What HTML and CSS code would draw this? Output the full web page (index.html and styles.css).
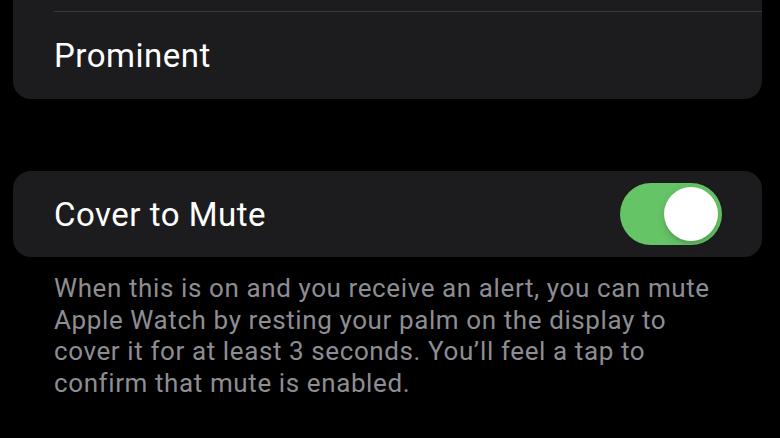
FILE: index.html
```html
<!DOCTYPE html>
<html lang="en">
<head>
    <meta charset="UTF-8">
    <meta name="viewport" content="width=device-width, initial-scale=1.0">
    <title>Notifications</title>
    <link rel="stylesheet" href="styles.css">
</head>
<body>
    <div class="page">
        <div class="group group-top">
            <div class="row row-hidden"></div>
            <div class="row">
                <span class="label">Prominent</span>
            </div>
        </div>

        <div class="group">
            <div class="row">
                <span class="label">Cover to Mute</span>
                <div class="switch on"><div class="knob"></div></div>
            </div>
        </div>
        <p class="footnote">When this is on and you receive an alert, you can mute Apple Watch by resting your palm on the display to cover it for at least 3 seconds. You’ll feel a tap to confirm that mute is enabled.</p>
    </div>
</body>
</html>
```

FILE: styles.css
```css
body {
    margin: 0;
    background-color: #000;
    font-family: Roboto, "Liberation Sans", sans-serif;
    color: #fff;
    overflow: hidden;
}

.page {
    padding: 0 18px 0 13px;
}

.group {
    background-color: #1c1c1e;
    border-radius: 18px;
}

.group-top {
    margin-top: -60px;
    margin-bottom: 72px;
}

.row {
    display: flex;
    align-items: center;
    justify-content: space-between;
    height: 87px;
    padding: 0 41px 0 41px;
    box-sizing: border-box;
}

.row-hidden {
    height: 71px;
}

.row + .row {
    border-top: 1px solid #3a3a3c;
    margin-left: 41px;
    padding-left: 0;
    height: 88px;
}

.label {
    font-size: 33px;
    letter-spacing: 0.5px;
}

.row:has(.switch) {
    height: 86px;
    padding-right: 40px;
}

.switch {
    width: 102px;
    height: 62px;
    border-radius: 31px;
    background-color: #65c466;
    position: relative;
}

.knob {
    position: absolute;
    top: 4px;
    right: 4px;
    width: 54px;
    height: 54px;
    border-radius: 50%;
    background-color: #fff;
    box-shadow: 0 3px 8px rgba(0, 0, 0, 0.15), 0 3px 1px rgba(0, 0, 0, 0.06);
}

.footnote {
    margin: 16px 37px 0 41px;
    font-size: 26px;
    line-height: 31.7px;
    color: #8d8d93;
    letter-spacing: 0.6px;
}
```
